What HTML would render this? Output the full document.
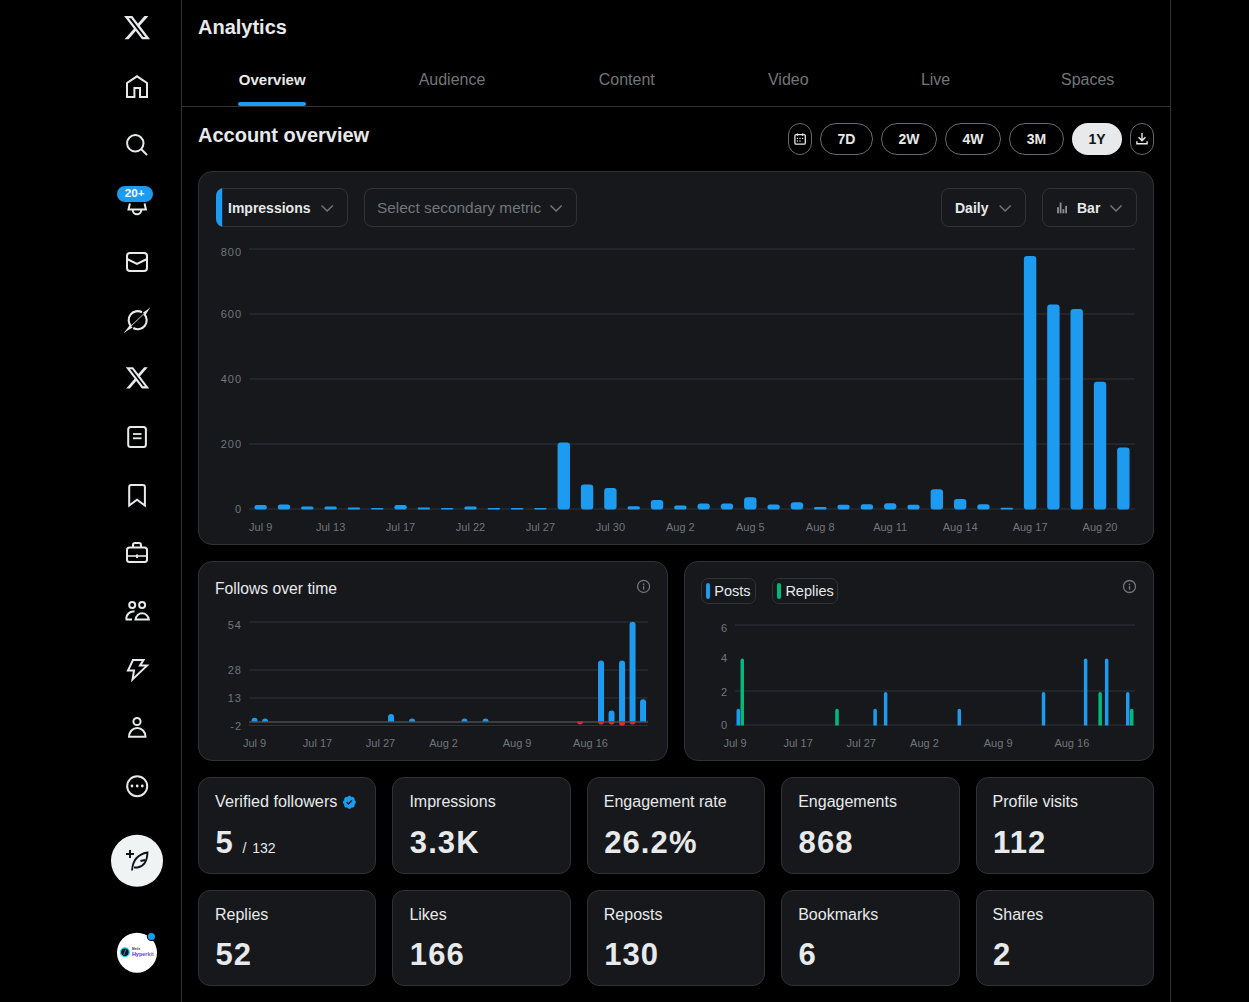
<!DOCTYPE html><html><head><meta charset="utf-8"><style>
html,body{margin:0;padding:0;background:#000;width:1249px;height:1002px;overflow:hidden;}
body{position:relative;font-family:"Liberation Sans", sans-serif;}
.t{position:absolute;white-space:nowrap;}
.b{position:absolute;}
svg{position:absolute;left:0;top:0;}
</style></head><body>
<div class="b" style="left:181px;top:0px;width:1px;height:1002px;background:#2f3336;border-radius:0px;box-sizing:border-box;"></div>
<div class="b" style="left:1170px;top:0px;width:1px;height:1002px;background:#2f3336;border-radius:0px;box-sizing:border-box;"></div>
<div class="b" style="left:182px;top:106px;width:988px;height:1px;background:#2f3336;border-radius:0px;box-sizing:border-box;"></div>
<div class="t" style="left:198.00px;top:16.87px;font-size:20px;line-height:20px;font-weight:700;color:#e7e9ea;">Analytics</div>
<div class="t" style="left:-27.80px;width:600px;text-align:center;top:72.00px;font-size:15px;line-height:15px;font-weight:700;color:#e7e9ea;">Overview</div>
<div class="t" style="left:152.00px;width:600px;text-align:center;top:72.06px;font-size:16px;line-height:16px;font-weight:400;color:#71767b;">Audience</div>
<div class="t" style="left:326.80px;width:600px;text-align:center;top:72.06px;font-size:16px;line-height:16px;font-weight:400;color:#71767b;">Content</div>
<div class="t" style="left:488.30px;width:600px;text-align:center;top:72.06px;font-size:16px;line-height:16px;font-weight:400;color:#71767b;">Video</div>
<div class="t" style="left:635.60px;width:600px;text-align:center;top:72.06px;font-size:16px;line-height:16px;font-weight:400;color:#71767b;">Live</div>
<div class="t" style="left:787.70px;width:600px;text-align:center;top:72.06px;font-size:16px;line-height:16px;font-weight:400;color:#71767b;">Spaces</div>
<div class="b" style="left:238px;top:102px;width:68px;height:4px;background:#1d9bf0;border-radius:2px;box-sizing:border-box;"></div>
<div class="t" style="left:198.00px;top:124.67px;font-size:20px;line-height:20px;font-weight:700;color:#e7e9ea;">Account overview</div>
<div class="b" style="left:788px;top:123px;width:24px;height:32px;background:transparent;border:1px solid #676b6f;border-radius:16px;box-sizing:border-box;"></div>
<div class="b" style="left:820px;top:123px;width:53px;height:32px;background:transparent;border:1px solid #676b6f;border-radius:16px;box-sizing:border-box;"></div>
<div class="t" style="left:546.50px;width:600px;text-align:center;top:131.95px;font-size:14px;line-height:14px;font-weight:700;color:#e7e9ea;">7D</div>
<div class="b" style="left:881px;top:123px;width:56px;height:32px;background:transparent;border:1px solid #676b6f;border-radius:16px;box-sizing:border-box;"></div>
<div class="t" style="left:609.00px;width:600px;text-align:center;top:131.95px;font-size:14px;line-height:14px;font-weight:700;color:#e7e9ea;">2W</div>
<div class="b" style="left:945px;top:123px;width:56px;height:32px;background:transparent;border:1px solid #676b6f;border-radius:16px;box-sizing:border-box;"></div>
<div class="t" style="left:673.00px;width:600px;text-align:center;top:131.95px;font-size:14px;line-height:14px;font-weight:700;color:#e7e9ea;">4W</div>
<div class="b" style="left:1009px;top:123px;width:55px;height:32px;background:transparent;border:1px solid #676b6f;border-radius:16px;box-sizing:border-box;"></div>
<div class="t" style="left:736.50px;width:600px;text-align:center;top:131.95px;font-size:14px;line-height:14px;font-weight:700;color:#e7e9ea;">3M</div>
<div class="b" style="left:1072px;top:123px;width:50px;height:32px;background:#e7e9ea;border-radius:16px;box-sizing:border-box;"></div>
<div class="t" style="left:797.00px;width:600px;text-align:center;top:131.95px;font-size:14px;line-height:14px;font-weight:700;color:#0f1419;">1Y</div>
<div class="b" style="left:1130px;top:123px;width:24px;height:32px;background:transparent;border:1px solid #676b6f;border-radius:16px;box-sizing:border-box;"></div>
<div class="b" style="left:198px;top:171px;width:956px;height:374px;background:#16181c;border:1px solid #2f3336;border-radius:14px;box-sizing:border-box;"></div>
<div class="t" style="left:228.00px;top:201.15px;font-size:14px;line-height:14px;font-weight:700;color:#e7e9ea;">Impressions</div>
<div class="b" style="left:364px;top:188px;width:213px;height:39px;background:transparent;border:1px solid #2f3336;border-radius:8px;box-sizing:border-box;"></div>
<div class="t" style="left:377.00px;top:199.96px;font-size:15.4px;line-height:15.4px;font-weight:400;color:#71767b;">Select secondary metric</div>
<div class="b" style="left:941px;top:188px;width:85px;height:39px;background:transparent;border:1px solid #2f3336;border-radius:8px;box-sizing:border-box;"></div>
<div class="t" style="left:955.00px;top:201.15px;font-size:14px;line-height:14px;font-weight:700;color:#e7e9ea;">Daily</div>
<div class="b" style="left:1042px;top:188px;width:95px;height:39px;background:transparent;border:1px solid #2f3336;border-radius:8px;box-sizing:border-box;"></div>
<div class="t" style="left:1077.00px;top:201.15px;font-size:14px;line-height:14px;font-weight:700;color:#e7e9ea;">Bar</div>
<div class="t" style="right:1008.00px;top:246.69px;font-size:11px;line-height:11px;font-weight:400;color:#71767b;letter-spacing:1px;margin-right:-1px;">800</div>
<div class="t" style="right:1008.00px;top:308.69px;font-size:11px;line-height:11px;font-weight:400;color:#71767b;letter-spacing:1px;margin-right:-1px;">600</div>
<div class="t" style="right:1008.00px;top:373.69px;font-size:11px;line-height:11px;font-weight:400;color:#71767b;letter-spacing:1px;margin-right:-1px;">400</div>
<div class="t" style="right:1008.00px;top:438.69px;font-size:11px;line-height:11px;font-weight:400;color:#71767b;letter-spacing:1px;margin-right:-1px;">200</div>
<div class="t" style="right:1008.00px;top:503.69px;font-size:11px;line-height:11px;font-weight:400;color:#71767b;letter-spacing:1px;margin-right:-1px;">0</div>
<div class="t" style="left:-39.34px;width:600px;text-align:center;top:521.69px;font-size:11px;line-height:11px;font-weight:400;color:#71767b;">Jul 9</div>
<div class="t" style="left:30.61px;width:600px;text-align:center;top:521.69px;font-size:11px;line-height:11px;font-weight:400;color:#71767b;">Jul 13</div>
<div class="t" style="left:100.56px;width:600px;text-align:center;top:521.69px;font-size:11px;line-height:11px;font-weight:400;color:#71767b;">Jul 17</div>
<div class="t" style="left:170.50px;width:600px;text-align:center;top:521.69px;font-size:11px;line-height:11px;font-weight:400;color:#71767b;">Jul 22</div>
<div class="t" style="left:240.45px;width:600px;text-align:center;top:521.69px;font-size:11px;line-height:11px;font-weight:400;color:#71767b;">Jul 27</div>
<div class="t" style="left:310.40px;width:600px;text-align:center;top:521.69px;font-size:11px;line-height:11px;font-weight:400;color:#71767b;">Jul 30</div>
<div class="t" style="left:380.35px;width:600px;text-align:center;top:521.69px;font-size:11px;line-height:11px;font-weight:400;color:#71767b;">Aug 2</div>
<div class="t" style="left:450.30px;width:600px;text-align:center;top:521.69px;font-size:11px;line-height:11px;font-weight:400;color:#71767b;">Aug 5</div>
<div class="t" style="left:520.24px;width:600px;text-align:center;top:521.69px;font-size:11px;line-height:11px;font-weight:400;color:#71767b;">Aug 8</div>
<div class="t" style="left:590.19px;width:600px;text-align:center;top:521.69px;font-size:11px;line-height:11px;font-weight:400;color:#71767b;">Aug 11</div>
<div class="t" style="left:660.14px;width:600px;text-align:center;top:521.69px;font-size:11px;line-height:11px;font-weight:400;color:#71767b;">Aug 14</div>
<div class="t" style="left:730.09px;width:600px;text-align:center;top:521.69px;font-size:11px;line-height:11px;font-weight:400;color:#71767b;">Aug 17</div>
<div class="t" style="left:800.04px;width:600px;text-align:center;top:521.69px;font-size:11px;line-height:11px;font-weight:400;color:#71767b;">Aug 20</div>
<div class="b" style="left:198px;top:561px;width:470px;height:200px;background:#16181c;border:1px solid #2f3336;border-radius:14px;box-sizing:border-box;"></div>
<div class="t" style="left:215.00px;top:580.71px;font-size:15.7px;line-height:15.7px;font-weight:400;color:#e7e9ea;">Follows over time</div>
<div class="t" style="right:1008.00px;top:619.69px;font-size:11px;line-height:11px;font-weight:400;color:#71767b;letter-spacing:1px;margin-right:-1px;">54</div>
<div class="t" style="right:1008.00px;top:664.69px;font-size:11px;line-height:11px;font-weight:400;color:#71767b;letter-spacing:1px;margin-right:-1px;">28</div>
<div class="t" style="right:1008.00px;top:692.69px;font-size:11px;line-height:11px;font-weight:400;color:#71767b;letter-spacing:1px;margin-right:-1px;">13</div>
<div class="t" style="right:1008.00px;top:720.69px;font-size:11px;line-height:11px;font-weight:400;color:#71767b;letter-spacing:1px;margin-right:-1px;">-2</div>
<div class="t" style="left:-45.45px;width:600px;text-align:center;top:737.69px;font-size:11px;line-height:11px;font-weight:400;color:#71767b;">Jul 9</div>
<div class="t" style="left:17.55px;width:600px;text-align:center;top:737.69px;font-size:11px;line-height:11px;font-weight:400;color:#71767b;">Jul 17</div>
<div class="t" style="left:80.55px;width:600px;text-align:center;top:737.69px;font-size:11px;line-height:11px;font-weight:400;color:#71767b;">Jul 27</div>
<div class="t" style="left:143.55px;width:600px;text-align:center;top:737.69px;font-size:11px;line-height:11px;font-weight:400;color:#71767b;">Aug 2</div>
<div class="t" style="left:217.05px;width:600px;text-align:center;top:737.69px;font-size:11px;line-height:11px;font-weight:400;color:#71767b;">Aug 9</div>
<div class="t" style="left:290.55px;width:600px;text-align:center;top:737.69px;font-size:11px;line-height:11px;font-weight:400;color:#71767b;">Aug 16</div>
<div class="b" style="left:684px;top:561px;width:470px;height:200px;background:#16181c;border:1px solid #2f3336;border-radius:14px;box-sizing:border-box;"></div>
<div class="b" style="left:701px;top:578px;width:55px;height:26px;background:transparent;border:1px solid #2f3336;border-radius:7px;box-sizing:border-box;"></div>
<div class="b" style="left:706px;top:583px;width:4px;height:16px;background:#1d9bf0;border-radius:2px;box-sizing:border-box;"></div>
<div class="t" style="left:714.30px;top:584.03px;font-size:14.5px;line-height:14.5px;font-weight:400;color:#e7e9ea;">Posts</div>
<div class="b" style="left:772px;top:578px;width:66px;height:26px;background:transparent;border:1px solid #2f3336;border-radius:7px;box-sizing:border-box;"></div>
<div class="b" style="left:777px;top:583px;width:4px;height:16px;background:#00ba7c;border-radius:2px;box-sizing:border-box;"></div>
<div class="t" style="left:785.40px;top:584.03px;font-size:14.5px;line-height:14.5px;font-weight:400;color:#e7e9ea;">Replies</div>
<div class="t" style="right:522.00px;top:622.99px;font-size:11px;line-height:11px;font-weight:400;color:#71767b;letter-spacing:1px;margin-right:-1px;">6</div>
<div class="t" style="right:522.00px;top:652.89px;font-size:11px;line-height:11px;font-weight:400;color:#71767b;letter-spacing:1px;margin-right:-1px;">4</div>
<div class="t" style="right:522.00px;top:686.79px;font-size:11px;line-height:11px;font-weight:400;color:#71767b;letter-spacing:1px;margin-right:-1px;">2</div>
<div class="t" style="right:522.00px;top:719.99px;font-size:11px;line-height:11px;font-weight:400;color:#71767b;letter-spacing:1px;margin-right:-1px;">0</div>
<div class="t" style="left:435.00px;width:600px;text-align:center;top:737.69px;font-size:11px;line-height:11px;font-weight:400;color:#71767b;">Jul 9</div>
<div class="t" style="left:498.16px;width:600px;text-align:center;top:737.69px;font-size:11px;line-height:11px;font-weight:400;color:#71767b;">Jul 17</div>
<div class="t" style="left:561.31px;width:600px;text-align:center;top:737.69px;font-size:11px;line-height:11px;font-weight:400;color:#71767b;">Jul 27</div>
<div class="t" style="left:624.47px;width:600px;text-align:center;top:737.69px;font-size:11px;line-height:11px;font-weight:400;color:#71767b;">Aug 2</div>
<div class="t" style="left:698.15px;width:600px;text-align:center;top:737.69px;font-size:11px;line-height:11px;font-weight:400;color:#71767b;">Aug 9</div>
<div class="t" style="left:771.83px;width:600px;text-align:center;top:737.69px;font-size:11px;line-height:11px;font-weight:400;color:#71767b;">Aug 16</div>
<div class="b" style="left:198.0px;top:777px;width:178.39999999999998px;height:97px;background:#16181c;border:1px solid #2f3336;border-radius:12px;box-sizing:border-box;"></div>
<div class="t" style="left:215.00px;top:793.49px;font-size:16.2px;line-height:16.2px;font-weight:400;color:#e7e9ea;">Verified followers</div>
<div class="t" style="left:215.40px;top:826.66px;font-size:31px;line-height:31px;font-weight:700;color:#e7e9ea;letter-spacing:1.1px;">5</div>
<div class="b" style="left:392.4px;top:777px;width:178.39999999999998px;height:97px;background:#16181c;border:1px solid #2f3336;border-radius:12px;box-sizing:border-box;"></div>
<div class="t" style="left:409.40px;top:793.66px;font-size:16px;line-height:16px;font-weight:400;color:#e7e9ea;">Impressions</div>
<div class="t" style="left:409.80px;top:826.66px;font-size:31px;line-height:31px;font-weight:700;color:#e7e9ea;letter-spacing:1.1px;">3.3K</div>
<div class="b" style="left:586.8px;top:777px;width:178.4000000000001px;height:97px;background:#16181c;border:1px solid #2f3336;border-radius:12px;box-sizing:border-box;"></div>
<div class="t" style="left:603.80px;top:793.66px;font-size:16px;line-height:16px;font-weight:400;color:#e7e9ea;">Engagement rate</div>
<div class="t" style="left:604.20px;top:826.66px;font-size:31px;line-height:31px;font-weight:700;color:#e7e9ea;letter-spacing:1.1px;">26.2%</div>
<div class="b" style="left:781.2px;top:777px;width:178.39999999999998px;height:97px;background:#16181c;border:1px solid #2f3336;border-radius:12px;box-sizing:border-box;"></div>
<div class="t" style="left:798.20px;top:793.66px;font-size:16px;line-height:16px;font-weight:400;color:#e7e9ea;">Engagements</div>
<div class="t" style="left:798.60px;top:826.66px;font-size:31px;line-height:31px;font-weight:700;color:#e7e9ea;letter-spacing:1.1px;">868</div>
<div class="b" style="left:975.6px;top:777px;width:178.39999999999998px;height:97px;background:#16181c;border:1px solid #2f3336;border-radius:12px;box-sizing:border-box;"></div>
<div class="t" style="left:992.60px;top:793.66px;font-size:16px;line-height:16px;font-weight:400;color:#e7e9ea;">Profile visits</div>
<div class="t" style="left:993.00px;top:826.66px;font-size:31px;line-height:31px;font-weight:700;color:#e7e9ea;letter-spacing:1.1px;">112</div>
<div class="b" style="left:198.0px;top:890px;width:178.39999999999998px;height:96px;background:#16181c;border:1px solid #2f3336;border-radius:12px;box-sizing:border-box;"></div>
<div class="t" style="left:215.00px;top:906.86px;font-size:16px;line-height:16px;font-weight:400;color:#e7e9ea;">Replies</div>
<div class="t" style="left:215.40px;top:938.96px;font-size:31px;line-height:31px;font-weight:700;color:#e7e9ea;letter-spacing:1.1px;">52</div>
<div class="b" style="left:392.4px;top:890px;width:178.39999999999998px;height:96px;background:#16181c;border:1px solid #2f3336;border-radius:12px;box-sizing:border-box;"></div>
<div class="t" style="left:409.40px;top:906.86px;font-size:16px;line-height:16px;font-weight:400;color:#e7e9ea;">Likes</div>
<div class="t" style="left:409.80px;top:938.96px;font-size:31px;line-height:31px;font-weight:700;color:#e7e9ea;letter-spacing:1.1px;">166</div>
<div class="b" style="left:586.8px;top:890px;width:178.4000000000001px;height:96px;background:#16181c;border:1px solid #2f3336;border-radius:12px;box-sizing:border-box;"></div>
<div class="t" style="left:603.80px;top:906.86px;font-size:16px;line-height:16px;font-weight:400;color:#e7e9ea;">Reposts</div>
<div class="t" style="left:604.20px;top:938.96px;font-size:31px;line-height:31px;font-weight:700;color:#e7e9ea;letter-spacing:1.1px;">130</div>
<div class="b" style="left:781.2px;top:890px;width:178.39999999999998px;height:96px;background:#16181c;border:1px solid #2f3336;border-radius:12px;box-sizing:border-box;"></div>
<div class="t" style="left:798.20px;top:906.86px;font-size:16px;line-height:16px;font-weight:400;color:#e7e9ea;">Bookmarks</div>
<div class="t" style="left:798.60px;top:938.96px;font-size:31px;line-height:31px;font-weight:700;color:#e7e9ea;letter-spacing:1.1px;">6</div>
<div class="b" style="left:975.6px;top:890px;width:178.39999999999998px;height:96px;background:#16181c;border:1px solid #2f3336;border-radius:12px;box-sizing:border-box;"></div>
<div class="t" style="left:992.60px;top:906.86px;font-size:16px;line-height:16px;font-weight:400;color:#e7e9ea;">Shares</div>
<div class="t" style="left:993.00px;top:938.96px;font-size:31px;line-height:31px;font-weight:700;color:#e7e9ea;letter-spacing:1.1px;">2</div>
<div class="t" style="left:242.50px;top:841.05px;font-size:14px;line-height:14px;font-weight:400;color:#e7e9ea;">/</div>
<div class="t" style="left:252.20px;top:841.05px;font-size:14px;line-height:14px;font-weight:400;color:#e7e9ea;">132</div>
<svg width="1249" height="1002"><polyline points="321.5,205.5 327.15,211 332.8,205.5" fill="none" stroke="#71767b" stroke-width="1.5"/><clipPath id="ddclip"><rect x="216" y="188" width="132" height="39" rx="8"/></clipPath><rect x="216.5" y="188.5" width="131" height="38" rx="7.5" fill="none" stroke="#2f3336"/><rect x="216" y="188" width="6.2" height="39" fill="#1d9bf0" clip-path="url(#ddclip)"/><polyline points="550.5,205.5 556.1,211 561.7,205.5" fill="none" stroke="#71767b" stroke-width="1.5"/><polyline points="999.6,205.5 1005.1500000000001,211 1010.7,205.5" fill="none" stroke="#71767b" stroke-width="1.5"/><polyline points="1110.5,205.5 1116.0,211 1121.5,205.5" fill="none" stroke="#71767b" stroke-width="1.5"/><rect x="1057.1" y="207.2" width="1.8" height="6.10" fill="#8b8f94"/><rect x="1059.6999999999998" y="202.6" width="1.8" height="10.70" fill="#8b8f94"/><rect x="1062.5" y="209.2" width="1.8" height="4.10" fill="#8b8f94"/><rect x="1065.1999999999998" y="205.9" width="1.8" height="7.40" fill="#8b8f94"/><rect x="249" y="248.5" width="886" height="1" fill="#2f3336"/><rect x="249" y="313.5" width="886" height="1" fill="#2f3336"/><rect x="249" y="378.5" width="886" height="1" fill="#2f3336"/><rect x="249" y="443.5" width="886" height="1" fill="#2f3336"/><rect x="249" y="508.5" width="886" height="1" fill="#2f3336"/><rect x="254.46" y="505.00" width="12.4" height="4.50" rx="2.25" fill="#1d9bf0"/><rect x="277.78" y="504.50" width="12.4" height="5.00" rx="2.50" fill="#1d9bf0"/><rect x="301.09" y="506.50" width="12.4" height="3.00" rx="1.50" fill="#1d9bf0"/><rect x="324.41" y="506.50" width="12.4" height="3.00" rx="1.50" fill="#1d9bf0"/><rect x="347.72" y="507.50" width="12.4" height="2.00" rx="1.00" fill="#1d9bf0"/><rect x="371.04" y="508.00" width="12.4" height="1.50" rx="0.75" fill="#1d9bf0"/><rect x="394.36" y="505.00" width="12.4" height="4.50" rx="2.25" fill="#1d9bf0"/><rect x="417.67" y="507.50" width="12.4" height="2.00" rx="1.00" fill="#1d9bf0"/><rect x="440.99" y="508.00" width="12.4" height="1.50" rx="0.75" fill="#1d9bf0"/><rect x="464.30" y="506.50" width="12.4" height="3.00" rx="1.50" fill="#1d9bf0"/><rect x="487.62" y="508.00" width="12.4" height="1.50" rx="0.75" fill="#1d9bf0"/><rect x="510.94" y="508.00" width="12.4" height="1.50" rx="0.75" fill="#1d9bf0"/><rect x="534.25" y="508.00" width="12.4" height="1.50" rx="0.75" fill="#1d9bf0"/><rect x="557.57" y="442.50" width="12.4" height="67.00" rx="3.00" fill="#1d9bf0"/><rect x="580.88" y="484.50" width="12.4" height="25.00" rx="3.00" fill="#1d9bf0"/><rect x="604.20" y="487.90" width="12.4" height="21.60" rx="3.00" fill="#1d9bf0"/><rect x="627.52" y="506.20" width="12.4" height="3.30" rx="1.65" fill="#1d9bf0"/><rect x="650.83" y="500.10" width="12.4" height="9.40" rx="3.00" fill="#1d9bf0"/><rect x="674.15" y="505.50" width="12.4" height="4.00" rx="2.00" fill="#1d9bf0"/><rect x="697.46" y="503.50" width="12.4" height="6.00" rx="3.00" fill="#1d9bf0"/><rect x="720.78" y="503.50" width="12.4" height="6.00" rx="3.00" fill="#1d9bf0"/><rect x="744.10" y="497.20" width="12.4" height="12.30" rx="3.00" fill="#1d9bf0"/><rect x="767.41" y="504.50" width="12.4" height="5.00" rx="2.50" fill="#1d9bf0"/><rect x="790.73" y="502.20" width="12.4" height="7.30" rx="3.00" fill="#1d9bf0"/><rect x="814.04" y="507.00" width="12.4" height="2.50" rx="1.25" fill="#1d9bf0"/><rect x="837.36" y="504.70" width="12.4" height="4.80" rx="2.40" fill="#1d9bf0"/><rect x="860.68" y="504.30" width="12.4" height="5.20" rx="2.60" fill="#1d9bf0"/><rect x="883.99" y="503.30" width="12.4" height="6.20" rx="3.00" fill="#1d9bf0"/><rect x="907.31" y="504.70" width="12.4" height="4.80" rx="2.40" fill="#1d9bf0"/><rect x="930.62" y="489.30" width="12.4" height="20.20" rx="3.00" fill="#1d9bf0"/><rect x="953.94" y="498.90" width="12.4" height="10.60" rx="3.00" fill="#1d9bf0"/><rect x="977.26" y="504.30" width="12.4" height="5.20" rx="2.60" fill="#1d9bf0"/><rect x="1000.57" y="507.80" width="12.4" height="1.70" rx="0.85" fill="#1d9bf0"/><rect x="1023.89" y="255.90" width="12.4" height="253.60" rx="3.00" fill="#1d9bf0"/><rect x="1047.20" y="304.50" width="12.4" height="205.00" rx="3.00" fill="#1d9bf0"/><rect x="1070.52" y="308.90" width="12.4" height="200.60" rx="3.00" fill="#1d9bf0"/><rect x="1093.84" y="381.70" width="12.4" height="127.80" rx="3.00" fill="#1d9bf0"/><rect x="1117.15" y="447.50" width="12.4" height="62.00" rx="3.00" fill="#1d9bf0"/><circle cx="643.6" cy="586.4" r="6" fill="none" stroke="#71767b" stroke-width="1.3"/><rect x="642.95" y="585.8" width="1.3" height="3.8" fill="#71767b"/><circle cx="643.6" cy="584.1999999999999" r="0.85" fill="#71767b"/><rect x="249" y="621.5" width="399" height="1" fill="#2f3336"/><rect x="249" y="669.5" width="399" height="1" fill="#2f3336"/><rect x="249" y="697.5" width="399" height="1" fill="#2f3336"/><rect x="249" y="725" width="399" height="1" fill="#2f3336"/><rect x="249" y="721.5" width="399" height="1" fill="#545659"/><path d="M251.55 721.50 V720.81 A3 3 0 0 1 257.55 720.81 V721.50 Z" fill="#1d9bf0"/><path d="M262.05 721.50 V721.50 A3 3 0 0 1 268.05 721.50 V721.50 Z" fill="#1d9bf0"/><path d="M388.05 721.50 V717.12 A3 3 0 0 1 394.05 717.12 V721.50 Z" fill="#1d9bf0"/><path d="M409.05 721.50 V721.50 A3 3 0 0 1 415.05 721.50 V721.50 Z" fill="#1d9bf0"/><path d="M461.55 721.50 V721.50 A3 3 0 0 1 467.55 721.50 V721.50 Z" fill="#1d9bf0"/><path d="M482.55 721.50 V721.50 A3 3 0 0 1 488.55 721.50 V721.50 Z" fill="#1d9bf0"/><path d="M598.05 721.50 V663.58 A3 3 0 0 1 604.05 663.58 V721.50 Z" fill="#1d9bf0"/><path d="M608.55 721.50 V713.42 A3 3 0 0 1 614.55 713.42 V721.50 Z" fill="#1d9bf0"/><path d="M619.05 721.50 V663.58 A3 3 0 0 1 625.05 663.58 V721.50 Z" fill="#1d9bf0"/><path d="M629.55 721.50 V624.82 A3 3 0 0 1 635.55 624.82 V721.50 Z" fill="#1d9bf0"/><path d="M640.05 721.50 V702.35 A3 3 0 0 1 646.05 702.35 V721.50 Z" fill="#1d9bf0"/><path d="M577.05 721.50 V721.50 A3 3 0 0 0 583.05 721.50 V721.50 Z" fill="#f4212e"/><path d="M598.05 721.50 V721.50 A3 3 0 0 0 604.05 721.50 V721.50 Z" fill="#f4212e"/><path d="M608.55 721.50 V721.50 A3 3 0 0 0 614.55 721.50 V721.50 Z" fill="#f4212e"/><path d="M619.05 721.50 V722.69 A3 3 0 0 0 625.05 722.69 V721.50 Z" fill="#f4212e"/><path d="M629.55 721.50 V721.50 A3 3 0 0 0 635.55 721.50 V721.50 Z" fill="#f4212e"/><rect x="249" y="721.5" width="399" height="1" fill="#545659" opacity="0.55"/><circle cx="1129.5" cy="586.5" r="6" fill="none" stroke="#71767b" stroke-width="1.3"/><rect x="1128.85" y="585.9" width="1.3" height="3.8" fill="#71767b"/><circle cx="1129.5" cy="584.3" r="0.85" fill="#71767b"/><rect x="735" y="624.5" width="400" height="1" fill="#2f3336"/><rect x="735" y="690.5" width="400" height="1" fill="#2f3336"/><rect x="735" y="724.5" width="400" height="1" fill="#2f3336"/><path d="M736.51 725.60 V710.38 A1.75 1.75 0 0 1 740.01 710.38 V725.60 Z" fill="#1d9bf0"/><path d="M873.35 725.60 V710.38 A1.75 1.75 0 0 1 876.85 710.38 V725.60 Z" fill="#1d9bf0"/><path d="M883.88 725.60 V693.71 A1.75 1.75 0 0 1 887.38 693.71 V725.60 Z" fill="#1d9bf0"/><path d="M957.56 725.60 V710.38 A1.75 1.75 0 0 1 961.06 710.38 V725.60 Z" fill="#1d9bf0"/><path d="M1041.77 725.60 V693.71 A1.75 1.75 0 0 1 1045.27 693.71 V725.60 Z" fill="#1d9bf0"/><path d="M1083.87 725.60 V660.37 A1.75 1.75 0 0 1 1087.37 660.37 V725.60 Z" fill="#1d9bf0"/><path d="M1104.92 725.60 V660.37 A1.75 1.75 0 0 1 1108.42 660.37 V725.60 Z" fill="#1d9bf0"/><path d="M1125.97 725.60 V693.71 A1.75 1.75 0 0 1 1129.47 693.71 V725.60 Z" fill="#1d9bf0"/><path d="M740.51 725.60 V660.37 A1.75 1.75 0 0 1 744.01 660.37 V725.60 Z" fill="#00ba7c"/><path d="M835.25 725.60 V710.38 A1.75 1.75 0 0 1 838.75 710.38 V725.60 Z" fill="#00ba7c"/><path d="M1098.40 725.60 V693.71 A1.75 1.75 0 0 1 1101.90 693.71 V725.60 Z" fill="#00ba7c"/><path d="M1129.97 725.60 V710.38 A1.75 1.75 0 0 1 1133.47 710.38 V725.60 Z" fill="#00ba7c"/><g transform="translate(341.8,794.7) scale(0.69)"><path fill="#1d9bf0" fill-rule="evenodd" d="M20.396 11c-.018-.646-.215-1.275-.57-1.816-.354-.54-.852-.972-1.438-1.246.223-.607.27-1.264.14-1.897-.131-.634-.437-1.218-.882-1.687-.47-.445-1.053-.75-1.687-.882-.633-.13-1.29-.083-1.897.14-.273-.587-.704-1.086-1.245-1.44S11.647 1.62 11 1.604c-.646.017-1.273.213-1.813.568s-.969.854-1.24 1.44c-.608-.223-1.267-.272-1.902-.14-.635.13-1.22.436-1.69.882-.445.47-.749 1.055-.878 1.688-.13.633-.08 1.29.144 1.896-.587.274-1.087.705-1.443 1.245-.356.54-.555 1.17-.574 1.817.02.647.218 1.276.574 1.817.356.54.856.972 1.443 1.245-.224.606-.274 1.263-.144 1.896.13.634.433 1.218.877 1.688.47.443 1.054.747 1.687.878.633.132 1.29.084 1.897-.136.274.586.705 1.084 1.246 1.439.54.354 1.17.551 1.816.569.647-.016 1.276-.213 1.817-.567s.972-.854 1.245-1.44c.604.239 1.266.296 1.903.164.636-.132 1.22-.447 1.68-.907.46-.46.776-1.044.908-1.681s.075-1.299-.165-1.903c.586-.274 1.084-.705 1.439-1.246.354-.54.551-1.17.569-1.816zM9.662 14.85l-3.429-3.428 1.293-1.302 2.072 2.072 4.4-4.794 1.347 1.246z"/></g><g transform="translate(122.6,13.2) scale(1.2)"><path fill="#e7e9ea" d="M18.244 2.25h3.308l-7.227 8.26 8.502 11.24H16.17l-5.214-6.817L4.99 21.75H1.68l7.73-8.835L1.254 2.25H8.08l4.713 6.231zm-1.161 17.52h1.833L7.084 4.126H5.117z"/></g><path d="M127 97 V83 L137 76.3 L147 83 V97 H140 V88 H134.4 V97 Z" fill="none" stroke="#e7e9ea" stroke-width="2" stroke-linejoin="miter"/><circle cx="135.3" cy="143.3" r="8.2" fill="none" stroke="#e7e9ea" stroke-width="2"/><line x1="141.3" y1="149.3" x2="147" y2="155" stroke="#e7e9ea" stroke-width="2"/><path d="M129.9 203.5 L128.5 209.6 H145.9 L144.6 203.5" fill="none" stroke="#e7e9ea" stroke-width="2"/><path d="M132.8 210 A4.2 4.2 0 0 0 141.2 210" fill="none" stroke="#e7e9ea" stroke-width="2"/><rect x="127" y="253" width="20" height="18" rx="3" fill="none" stroke="#e7e9ea" stroke-width="2"/><polyline points="127,259 137,264 147,259" fill="none" stroke="#e7e9ea" stroke-width="2"/><path d="M141.93 312.25 A9 9 0 0 0 131.18 326.41" fill="none" stroke="#e7e9ea" stroke-width="2.1"/><path d="M144.22 313.99 A9 9 0 0 1 133.27 328.03" fill="none" stroke="#e7e9ea" stroke-width="2.1"/><line x1="124.3" y1="332.5" x2="149.7" y2="308.2" stroke="#e7e9ea" stroke-width="0.9"/><path d="M129.6 325.3 L132.6 327.6 L124.6 332.2 Z M143.0 312.6 L145.4 315.2 L149.5 308.4 Z" fill="#e7e9ea"/><g transform="translate(124.4,364.8) scale(1.085)"><path fill="#e7e9ea" d="M18.244 2.25h3.308l-7.227 8.26 8.502 11.24H16.17l-5.214-6.817L4.99 21.75H1.68l7.73-8.835L1.254 2.25H8.08l4.713 6.231zm-1.161 17.52h1.833L7.084 4.126H5.117z"/></g><rect x="128.2" y="427" width="17.7" height="20" rx="2.5" fill="none" stroke="#e7e9ea" stroke-width="2"/><line x1="133" y1="434" x2="141.5" y2="434" stroke="#e7e9ea" stroke-width="1.8"/><line x1="133" y1="438.3" x2="141.5" y2="438.3" stroke="#e7e9ea" stroke-width="1.8"/><path d="M129.2 505.5 V487 Q129.2 485 131.2 485 H142.9 Q144.9 485 144.9 487 V505.5 L137 499.8 Z" fill="none" stroke="#e7e9ea" stroke-width="2" stroke-linejoin="miter"/><rect x="127" y="547.5" width="20" height="14.5" rx="2.5" fill="none" stroke="#e7e9ea" stroke-width="2"/><path d="M133 547.5 V545 Q133 543 135 543 H139 Q141 543 141 545 V547.5" fill="none" stroke="#e7e9ea" stroke-width="2"/><line x1="127" y1="556" x2="147" y2="556" stroke="#e7e9ea" stroke-width="1.6"/><line x1="137" y1="554.5" x2="137" y2="558" stroke="#e7e9ea" stroke-width="2"/><circle cx="132.2" cy="605" r="3" fill="none" stroke="#e7e9ea" stroke-width="2"/><circle cx="142.1" cy="605" r="3" fill="none" stroke="#e7e9ea" stroke-width="2"/><path d="M134.5 611.5 A7 7 0 0 0 126.5 619.5 H132" fill="none" stroke="#e7e9ea" stroke-width="2"/><path d="M135.5 619.6 A6.8 8 0 0 1 148.8 619.6 Z" fill="none" stroke="#e7e9ea" stroke-width="2"/><path d="M133 660 H143.5 L140 665.6 H147 L132.5 679.5 L134 670.6 H128 Z" fill="none" stroke="#e7e9ea" stroke-width="2" stroke-linejoin="miter"/><circle cx="137" cy="721.5" r="3.6" fill="none" stroke="#e7e9ea" stroke-width="2"/><path d="M129 736.8 A8.2 8.8 0 0 1 145.5 736.8 Z" fill="none" stroke="#e7e9ea" stroke-width="2"/><circle cx="137.2" cy="786.2" r="10" fill="none" stroke="#e7e9ea" stroke-width="2"/><circle cx="132" cy="786" r="1.4" fill="#e7e9ea"/><circle cx="137.2" cy="786" r="1.4" fill="#e7e9ea"/><circle cx="142.3" cy="786" r="1.4" fill="#e7e9ea"/><circle cx="137" cy="860.8" r="26" fill="#eff3f4"/><path d="M126 854 H134 M130 850 V858" stroke="#0f1419" stroke-width="2"/><path d="M132 870.5 Q133 855 147.5 852.5 Q147 866 137.5 867.5 L134 867.5 M140.5 861 L145 860" fill="none" stroke="#0f1419" stroke-width="1.8"/><circle cx="137" cy="952.7" r="20" fill="#ffffff"/><defs><linearGradient id="hg" x1="0" x2="1"><stop offset="0" stop-color="#3326d6"/><stop offset="1" stop-color="#8e62ee"/></linearGradient></defs><circle cx="124.9" cy="952.2" r="4.4" fill="#0b1626" stroke="#2fd0f5" stroke-width="1.3"/><path d="M125.8 949.5 L123.8 954.8" stroke="#2bb3a8" stroke-width="0.9"/><text x="132" y="949.7" font-family="Liberation Sans" font-weight="700" font-size="3.2" fill="#333" textLength="8.2" lengthAdjust="spacingAndGlyphs">Metis</text><text x="131.9" y="955.8" font-family="Liberation Sans" font-weight="700" font-size="6" fill="url(#hg)" textLength="22" lengthAdjust="spacingAndGlyphs">Hyperkit</text><circle cx="151.4" cy="936.5" r="4.6" fill="#000"/><circle cx="151.4" cy="936.5" r="3.6" fill="#1d9bf0"/><rect x="794.9" y="134.6" width="10.4" height="9.6" rx="1.2" fill="none" stroke="#e7e9ea" stroke-width="1.3"/><rect x="796.8" y="133.4" width="1.2" height="2.4" fill="#e7e9ea"/><rect x="802.1" y="133.4" width="1.2" height="2.4" fill="#e7e9ea"/><rect x="796.8" y="137.8" width="1.2" height="1.2" fill="#e7e9ea"/><rect x="799.4" y="137.8" width="1.2" height="1.2" fill="#e7e9ea"/><rect x="802.0" y="137.8" width="1.2" height="1.2" fill="#e7e9ea"/><rect x="796.8" y="140.4" width="1.2" height="1.2" fill="#e7e9ea"/><rect x="799.4" y="140.4" width="1.2" height="1.2" fill="#e7e9ea"/><line x1="1142" y1="133" x2="1142" y2="140" stroke="#e7e9ea" stroke-width="1.4"/><polyline points="1138.6,137.3 1142,140.6 1145.4,137.3" fill="none" stroke="#e7e9ea" stroke-width="1.5"/><path d="M1136.9 141.2 V143.8 H1147.1 V141.2" fill="none" stroke="#e7e9ea" stroke-width="1.4"/></svg>
<div class="b" style="left:116px;top:185px;width:38px;height:18px;background:#1d9bf0;border-radius:9px;box-sizing:border-box;border:1px solid #000;box-sizing:border-box;"></div>
<div class="t" style="left:-165.30px;width:600px;text-align:center;top:187.38px;font-size:11.6px;line-height:11.6px;font-weight:700;color:#fff;">20+</div>
</body></html>
